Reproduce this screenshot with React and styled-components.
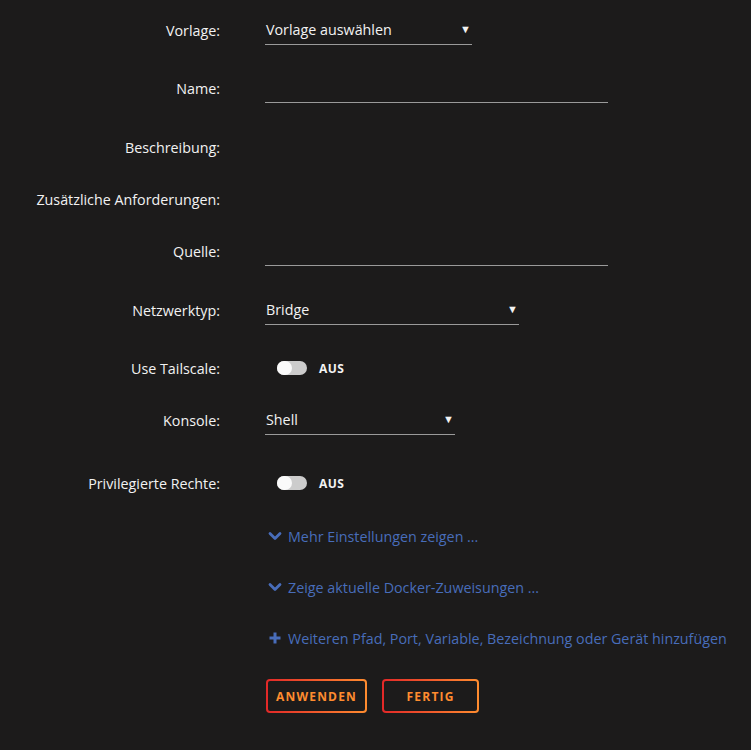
import React, { useState } from 'react';
import styled, { createGlobalStyle } from 'styled-components';

const GlobalStyle = createGlobalStyle`
  html, body {
    margin: 0;
    padding: 0;
    background: #1c1b1b;
    font-family: "Open Sans", "Noto Sans", sans-serif;
    color: #f2f2f2;
  }
`;

const Form = styled.div`
  width: 751px;
  height: 750px;
  box-sizing: border-box;
`;

const Row = styled.div`
  display: grid;
  grid-template-columns: 220px 1fr;
  column-gap: 45px;
  height: ${p => p.$h}px;
  padding-top: 15px;
  box-sizing: border-box;
  align-items: start;
`;

const Label = styled.div`
  height: 30px;
  display: flex;
  align-items: center;
  justify-content: flex-end;
  font-size: 14.3px;
  color: #f2f2f2;
  white-space: nowrap;
`;

const Field = styled.div`
  height: 30px;
  display: flex;
  align-items: center;
`;

const TextInput = styled.div`
  width: ${p => p.$w}px;
  height: 30px;
  box-sizing: border-box;
  border-bottom: 1px solid #9a9a9a;
`;

const Select = styled.div`
  position: relative;
  width: ${p => p.$w}px;
  height: 30px;
  box-sizing: border-box;
  border-bottom: 1px solid #9a9a9a;
  display: flex;
  align-items: center;
  padding-left: 1px;
  font-size: 14.3px;
  color: #f2f2f2;
`;

const Caret = styled.span`
  position: absolute;
  right: 1px;
  top: 6px;
  font-size: 11px;
  color: #f2f2f2;
`;

const SwitchWrap = styled.div`
  display: flex;
  align-items: center;
  gap: 12px;
  padding-left: 12px;
`;

const Track = styled.div`
  position: relative;
  width: 30px;
  height: 14px;
  border-radius: 7px;
  background: #cccccc;
`;

const Knob = styled.div`
  position: absolute;
  left: 0;
  top: 0;
  width: 15px;
  height: 14px;
  border-radius: 7px;
  background: #fafafa;
`;

const SwitchText = styled.span`
  font-size: 12px;
  font-weight: 700;
  letter-spacing: 0.5px;
  color: #f2f2f2;
`;

const Link = styled.a`
  display: flex;
  align-items: center;
  gap: 6px;
  font-size: 14.3px;
  color: #486dba;
  cursor: pointer;
  text-decoration: none;
  white-space: nowrap;
  padding-left: 3px;
`;

const Buttons = styled.div`
  display: flex;
  gap: 15px;
  padding-left: 266px;
`;

const Button = styled.button`
  height: 34px;
  min-width: 97px;
  padding: 0 8px;
  border: 2px solid transparent;
  border-radius: 4px;
  background:
    linear-gradient(#1c1b1b, #1c1b1b) padding-box,
    linear-gradient(90deg, #e22828, #ff8c2f) border-box;
  color: #ff8c2f;
  font-family: "Open Sans", "Noto Sans", sans-serif;
  font-size: 12px;
  font-weight: 700;
  letter-spacing: 1.2px;
  text-transform: uppercase;
  cursor: pointer;
`;

const Chevron = () => (
  <svg width="14" height="14" viewBox="0 0 14 14">
    <path d="M2 4.5 L7 9.5 L12 4.5" fill="none" stroke="#486dba" strokeWidth="2.8" strokeLinecap="round" strokeLinejoin="round" />
  </svg>
);

const Plus = () => (
  <svg width="14" height="14" viewBox="0 0 14 14">
    <path d="M7 1.5 V12.5 M1.5 7 H12.5" fill="none" stroke="#486dba" strokeWidth="3" />
  </svg>
);

const Toggle = ({ on }) => (
  <SwitchWrap>
    <Track>
      <Knob />
    </Track>
    <SwitchText>{on ? 'AN' : 'AUS'}</SwitchText>
  </SwitchWrap>
);

const App = () => {
  const [tailscale] = useState(false);
  const [privileged] = useState(false);

  return (
    <Form>
      <GlobalStyle />
      <Row $h={58}>
        <Label>Vorlage:</Label>
        <Field>
          <Select $w={207}>Vorlage auswählen<Caret>▼</Caret></Select>
        </Field>
      </Row>
      <Row $h={59}>
        <Label>Name:</Label>
        <Field><TextInput $w={343} /></Field>
      </Row>
      <Row $h={52}>
        <Label>Beschreibung:</Label>
        <Field />
      </Row>
      <Row $h={52}>
        <Label>Zusätzliche Anforderungen:</Label>
        <Field />
      </Row>
      <Row $h={59}>
        <Label>Quelle:</Label>
        <Field><TextInput $w={343} /></Field>
      </Row>
      <Row $h={58}>
        <Label>Netzwerktyp:</Label>
        <Field>
          <Select $w={254}>Bridge<Caret>▼</Caret></Select>
        </Field>
      </Row>
      <Row $h={52}>
        <Label>Use Tailscale:</Label>
        <Field><Toggle on={tailscale} /></Field>
      </Row>
      <Row $h={63}>
        <Label>Konsole:</Label>
        <Field>
          <Select $w={190}>Shell<Caret>▼</Caret></Select>
        </Field>
      </Row>
      <Row $h={53}>
        <Label>Privilegierte Rechte:</Label>
        <Field><Toggle on={privileged} /></Field>
      </Row>
      <Row $h={51}>
        <Label />
        <Field><Link><Chevron />Mehr Einstellungen zeigen ...</Link></Field>
      </Row>
      <Row $h={51}>
        <Label />
        <Field><Link><Chevron />Zeige aktuelle Docker-Zuweisungen ...</Link></Field>
      </Row>
      <Row $h={71}>
        <Label />
        <Field><Link><Plus />Weiteren Pfad, Port, Variable, Bezeichnung oder Gerät hinzufügen</Link></Field>
      </Row>
      <Buttons>
        <Button>Anwenden</Button>
        <Button>Fertig</Button>
      </Buttons>
    </Form>
  );
};

export default App;
